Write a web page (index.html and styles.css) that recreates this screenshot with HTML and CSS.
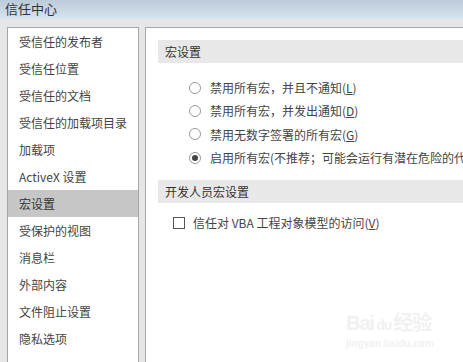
FILE: index.html
```html
<!DOCTYPE html>
<html lang="zh-CN">
<head>
  <meta charset="UTF-8">
  <title>信任中心</title>
  <link rel="stylesheet" href="styles.css">
</head>
<body>
  <div class="titlebar">信任中心</div>

  <div class="main">
    <ul class="nav">
      <li class="nav-item">受信任的发布者</li>
      <li class="nav-item">受信任位置</li>
      <li class="nav-item">受信任的文档</li>
      <li class="nav-item">受信任的加载项目录</li>
      <li class="nav-item">加载项</li>
      <li class="nav-item">ActiveX 设置</li>
      <li class="nav-item selected">宏设置</li>
      <li class="nav-item">受保护的视图</li>
      <li class="nav-item">消息栏</li>
      <li class="nav-item">外部内容</li>
      <li class="nav-item">文件阻止设置</li>
      <li class="nav-item">隐私选项</li>
    </ul>

    <div class="content">
      <div class="section-title">宏设置</div>
      <div class="options">
        <div class="option"><span class="radio"></span>禁用所有宏，并且不通知(<u>L</u>)</div>
        <div class="option"><span class="radio"></span>禁用所有宏，并发出通知(<u>D</u>)</div>
        <div class="option"><span class="radio"></span>禁用无数字签署的所有宏(<u>G</u>)</div>
        <div class="option"><span class="radio checked"></span><span class="clip">启用所有宏(不推荐；可能会运行有潜在危险的代码)(<u>E</u>)</span></div>
      </div>

      <div class="section-title">开发人员宏设置</div>
      <div class="check-row"><span class="checkbox"></span>信任对 VBA 工程对象模型的访问(<u>V</u>)</div>
    </div>
  </div>

  <div class="watermark">
    <div class="wm-logo">Bai<span class="wm-paw">du</span>经验</div>
    <div class="wm-url">jingyan.baidu.com</div>
  </div>
</body>
</html>
```

FILE: styles.css
```css
* {
  margin: 0;
  padding: 0;
  box-sizing: border-box;
}

body {
  width: 463px;
  height: 362px;
  overflow: hidden;
  background: #e6e6e6;
  color: #444;
  font-family: "Microsoft YaHei", "Noto Sans CJK SC", "Noto Sans", sans-serif;
  font-size: 12px;
  position: relative;
}

.titlebar {
  height: 19px;
  line-height: 17px;
  padding-left: 5px;
  font-size: 13px;
  color: #333;
  background: linear-gradient(#bccbd9, #d7e4f0);
}

.main {
  display: flex;
  gap: 6px;
  padding: 8px 0 0 7px;
  height: 343px;
}

.nav {
  list-style: none;
  width: 132px;
  flex-shrink: 0;
  background: #fff;
  border: 1px solid #a6a6a6;
  border-bottom: none;
}

.nav-item {
  height: 27px;
  line-height: 27px;
  padding-left: 11px;
  white-space: nowrap;
}

.nav-item.selected {
  background: #c6c6c6;
  color: #333;
}

.content {
  flex: 1;
  min-width: 0;
  background: #fff;
  border-left: 1px solid #a6a6a6;
  border-top: 1px solid #a6a6a6;
  padding: 12px 0 0 12px;
  overflow: hidden;
}

.section-title {
  height: 23px;
  line-height: 23px;
  padding-left: 7px;
  background: #e8e8e8;
  color: #333;
  white-space: nowrap;
}

.options {
  padding: 13px 0 11px 31px;
}

.option,
.check-row {
  display: flex;
  align-items: center;
  height: 23.3px;
  white-space: nowrap;
}

.clip {
  overflow: hidden;
  min-width: 0;
}

.radio {
  width: 12px;
  height: 12px;
  margin-right: 9px;
  border: 1px solid #9a9a9a;
  border-radius: 50%;
  background: #fff;
  flex-shrink: 0;
  position: relative;
}

.radio.checked::after {
  content: "";
  position: absolute;
  top: 2px;
  left: 2px;
  width: 6px;
  height: 6px;
  border-radius: 50%;
  background: #444;
}

.check-row {
  margin: 8px 0 0 15px;
}

.checkbox {
  width: 12px;
  height: 12px;
  margin-right: 8px;
  border: 1px solid #555;
  background: #fff;
  flex-shrink: 0;
}

u {
  text-decoration: underline;
  text-underline-offset: 1px;
}

.watermark {
  position: absolute;
  left: 346px;
  top: 310px;
  color: #f1f1f1;
  font-family: "Liberation Sans", "Noto Sans CJK SC", sans-serif;
  pointer-events: none;
}

.wm-logo {
  font-size: 20px;
  line-height: 26px;
  font-weight: bold;
  letter-spacing: -1px;
}

.wm-paw {
  font-size: 14px;
  margin: 0 2px;
}

.wm-url {
  font-size: 10px;
  line-height: 12px;
  font-weight: bold;
}
```
